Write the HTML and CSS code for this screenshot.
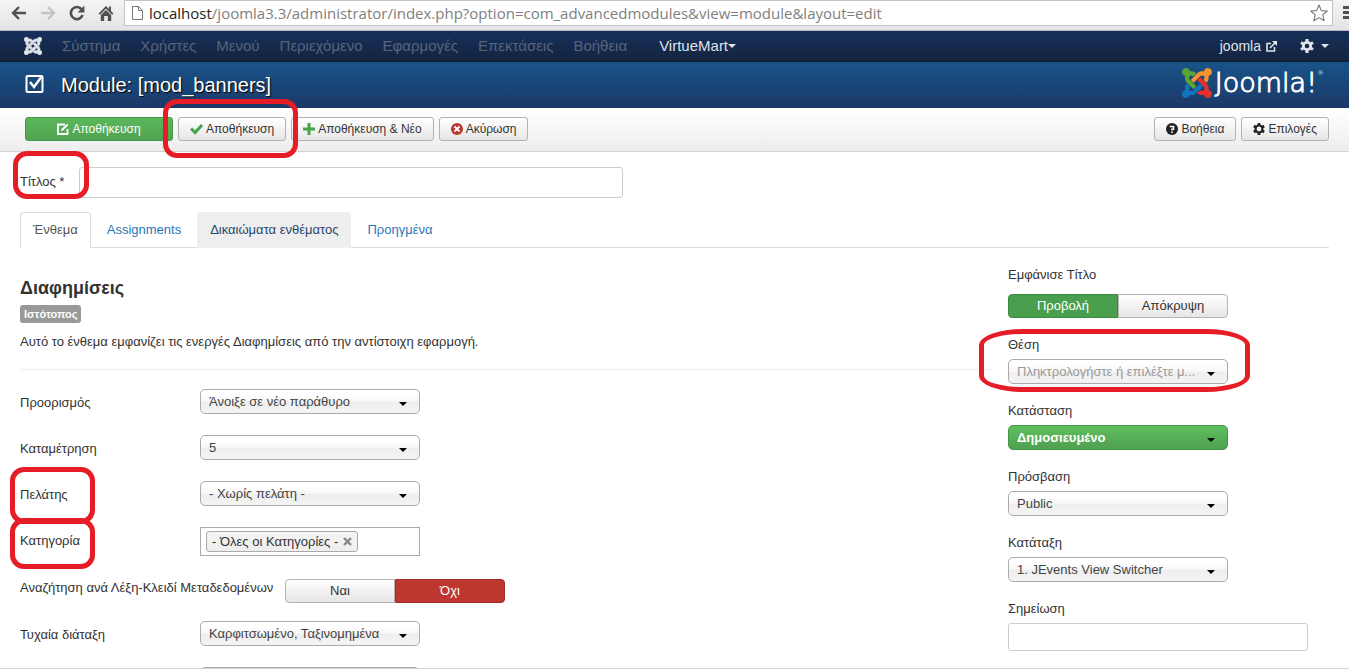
FILE: index.html
```html
<!DOCTYPE html>
<html lang="el">

<head>
    <meta charset="UTF-8">
    <meta name="viewport" content="width=device-width, initial-scale=1.0">
    <title>Module: [mod_banners]</title>
    <link rel="stylesheet" href="styles.css">
</head>

<body>

    <!-- Browser bar -->
    <div class="browser">
        <button class="browser-btn" aria-label="Back"><svg width="16" height="14" viewBox="0 0 16 14" fill="none" stroke="#505050" stroke-width="2.4"><path d="M15 7H2M8 1L2 7l6 6"/></svg></button>
        <button class="browser-btn" aria-label="Forward"><svg width="16" height="14" viewBox="0 0 16 14" fill="none" stroke="#c4c4c4" stroke-width="2.4"><path d="M1 7h13M8 1l6 6-6 6"/></svg></button>
        <button class="browser-btn" aria-label="Reload"><svg width="16" height="16" viewBox="0 0 16 16"><path d="M12.5 4.2A6 6 0 1 0 13.6 10" fill="none" stroke="#505050" stroke-width="2.6"/><path d="M15.4 0.6V7.4H8.6z" fill="#505050"/></svg></button>
        <button class="browser-btn" aria-label="Home"><svg width="16" height="16" viewBox="0 0 16 16" fill="#505050"><path d="M8 1L0.5 8.5l1.4 1.3L8 3.8l6.1 6 1.4-1.3L13 6V1.5h-2V4z"/><path d="M2.8 10L8 5l5.2 5v6H9.8v-5H6.2v5H2.8z"/></svg></button>
        <div class="address">
            <svg width="13" height="16" viewBox="0 0 13 16" fill="#fff" stroke="#777"><path d="M1.5 1.5h6l4 4v9h-10zM7.5 1.5v4h4"/></svg>
            <span class="url"><b>localhost</b>/joomla3.3/administrator/index.php?option=com_advancedmodules&amp;view=module&amp;layout=edit</span>
            <svg width="18" height="18" viewBox="0 0 18 18" fill="none" stroke="#777" stroke-width="1.1" stroke-linejoin="round"><path d="M9 1l2.3 5.6 6 .4-4.6 3.9 1.5 5.9L9 13.6l-5.2 3.2 1.5-5.9L.7 7l6-.4z"/></svg>
        </div>
        <svg class="menu-icon" width="14" height="14" viewBox="0 0 14 14" fill="#505050"><path d="M0 0h14v3H0zM0 5h14v3H0zM0 10h14v3H0z"/></svg>
    </div>

    <!-- Top navigation -->
    <nav class="navbar">
        <a href="#" class="brand" aria-label="Joomla">
            <svg width="18" height="18" viewBox="0 32 448 448" fill="#dfe3ea" stroke="#dfe3ea" stroke-width="14">
                <path d="M.6 92.1C.6 58.8 27.4 32 60.4 32c30 0 54.5 21.9 59.2 50.2 32.6-7.6 67.1.6 96.5 30l-44.3 44.3c-20.5-20.5-42.6-16.3-55.4-3.5-14.3 14.3-14.3 37.9 0 52.2l99.5 99.5-44 44.3c-87.7-87.2-49.7-49.7-99.8-99.7-26.8-26.5-35-64.8-24.8-98.9C20.4 144.6.6 120.7.6 92.1z"/>
                <path d="M130.1 208.5l44.3 44.3c10-10 89.7-89.7 99.7-99.8 14.3-14.3 37.6-14.3 51.9 0 12.8 12.8 17 35-3.5 55.4l44 44.3c31.2-31.2 38.5-67.6 28.9-101.2 29.2-4.1 51.9-29.2 51.9-59.5 0-33.2-26.8-60.1-59.8-60.1-30.3 0-55.4 22.5-59.5 51.6-33.8-9.9-71.7-1.5-98.3 25.1-18.3 19.1-71.1 71.5-99.6 99.9z"/>
                <path d="M396.4 360.7c8.2-32.7-.9-68.5-26.3-93.9-11.8-12.2 5 4.7-99.5-99.7l-44.3 44.3 99.7 99.7c14.3 14.3 14.3 37.6 0 51.9-12.8 12.8-35 17-55.4-3.5l-44 44.3c27.6 30.2 68 38.8 102.7 28 5.5 27.4 29.7 48.1 58.9 48.1 33 0 59.8-26.8 59.8-60.1 0-30.2-22.5-55-51.6-59.1z"/>
                <path d="M312.1 307.6l-44-44.3c-87 86.4-50.4 50.4-99.7 99.8-14.3 14.3-37.6 14.3-51.9 0-13.1-13.4-16.9-35.3 3.2-55.4l-44-44.3c-30.2 30.2-38 65.2-29.5 98.3-26.7 6-46.2 29.9-46.2 58.2C0 453.2 26.8 480 59.8 480c28.6 0 52.5-19.8 58.6-46.7 32.7 8.2 68.5-.6 94.2-26 32.1-32.2 12.2-12.2 99.5-99.7z"/>
            </svg>
        </a>
        <span class="disabled">Σύστημα</span>
        <span class="disabled">Χρήστες</span>
        <span class="disabled">Μενού</span>
        <span class="disabled">Περιεχόμενο</span>
        <span class="disabled">Εφαρμογές</span>
        <span class="disabled">Επεκτάσεις</span>
        <span class="disabled">Βοήθεια</span>
        <a href="#" class="component">VirtueMart<i class="caret"></i></a>
        <a href="#" class="site">joomla
            <svg width="11" height="11" viewBox="0 0 11 11" fill="none" stroke="#dfe3ea" stroke-width="1.6"><path d="M5 2.5H1v7.5h7.5V6"/><path d="M4 7l5-5"/><path d="M6 0h5v5z" fill="#dfe3ea" stroke="none"/></svg>
        </a>
        <a href="#" class="settings" aria-label="Settings">
            <svg width="14" height="14" viewBox="0 0 14 14"><circle cx="7" cy="7" r="3.7" fill="none" stroke="#dfe3ea" stroke-width="2.8"/><path d="M7 0v3M7 11v3M1 3.5l2.5 1.5M10.5 9L13 10.5M1 10.5L3.5 9M10.5 5L13 3.5" stroke="#dfe3ea" stroke-width="3.2"/></svg>
            <i class="caret"></i>
        </a>
    </nav>

    <!-- Page title -->
    <header class="header">
        <svg width="20" height="20" viewBox="0 0 20 20" fill="none" stroke="#fff"><rect x="1.5" y="1" width="16" height="16" rx="1" stroke-width="2"/><path d="M5 7l4 5 8-11" stroke-width="2.4"/></svg>
        <h1>Module: [mod_banners]</h1>
        <div class="logo">
            <svg width="30" height="30" viewBox="0 32 448 448">
                <path fill="#5ba532" d="M.6 92.1C.6 58.8 27.4 32 60.4 32c30 0 54.5 21.9 59.2 50.2 32.6-7.6 67.1.6 96.5 30l-44.3 44.3c-20.5-20.5-42.6-16.3-55.4-3.5-14.3 14.3-14.3 37.9 0 52.2l99.5 99.5-44 44.3c-87.7-87.2-49.7-49.7-99.8-99.7-26.8-26.5-35-64.8-24.8-98.9C20.4 144.6.6 120.7.6 92.1z"/>
                <path fill="#f9922f" d="M130.1 208.5l44.3 44.3c10-10 89.7-89.7 99.7-99.8 14.3-14.3 37.6-14.3 51.9 0 12.8 12.8 17 35-3.5 55.4l44 44.3c31.2-31.2 38.5-67.6 28.9-101.2 29.2-4.1 51.9-29.2 51.9-59.5 0-33.2-26.8-60.1-59.8-60.1-30.3 0-55.4 22.5-59.5 51.6-33.8-9.9-71.7-1.5-98.3 25.1-18.3 19.1-71.1 71.5-99.6 99.9z"/>
                <path fill="#e8302a" d="M396.4 360.7c8.2-32.7-.9-68.5-26.3-93.9-11.8-12.2 5 4.7-99.5-99.7l-44.3 44.3 99.7 99.7c14.3 14.3 14.3 37.6 0 51.9-12.8 12.8-35 17-55.4-3.5l-44 44.3c27.6 30.2 68 38.8 102.7 28 5.5 27.4 29.7 48.1 58.9 48.1 33 0 59.8-26.8 59.8-60.1 0-30.2-22.5-55-51.6-59.1z"/>
                <path fill="#1274bb" d="M312.1 307.6l-44-44.3c-87 86.4-50.4 50.4-99.7 99.8-14.3 14.3-37.6 14.3-51.9 0-13.1-13.4-16.9-35.3 3.2-55.4l-44-44.3c-30.2 30.2-38 65.2-29.5 98.3-26.7 6-46.2 29.9-46.2 58.2C0 453.2 26.8 480 59.8 480c28.6 0 52.5-19.8 58.6-46.7 32.7 8.2 68.5-.6 94.2-26 32.1-32.2 12.2-12.2 99.5-99.7z"/>
            </svg>
            <span>Joomla!</span><sup>®</sup>
        </div>
    </header>

    <!-- Toolbar -->
    <div class="toolbar">
        <button class="btn btn-success btn-apply">
            <svg width="12" height="12" viewBox="0 0 12 12" fill="none" stroke="#fff" stroke-width="1.8"><path d="M8 1.5H1v9.5h9.5V6"/><path d="M4 8l.5-2L10 .8 11.4 2 6 7.5z" fill="#fff" stroke="none"/></svg>
            Αποθήκευση
        </button>
        <div class="marked">
            <button class="btn">
                <svg width="13" height="12" viewBox="0 0 13 12" fill="none" stroke="#46a546" stroke-width="3"><path d="M1 5.5l4 4 7-7.5"/></svg>
                Αποθήκευση
            </button>
            <span class="mark mark-save"></span>
        </div>
        <button class="btn">
            <svg width="12" height="12" viewBox="0 0 12 12" fill="#46a546"><path d="M4.5 0h3v4.5H12v3H7.5V12h-3V7.5H0v-3h4.5z"/></svg>
            Αποθήκευση &amp; Νέο
        </button>
        <button class="btn">
            <svg width="12" height="12" viewBox="0 0 12 12"><circle cx="6" cy="6" r="6" fill="#bd362f"/><path d="M3.5 3.5l5 5M8.5 3.5l-5 5" stroke="#fff" stroke-width="1.8"/></svg>
            Ακύρωση
        </button>
        <span class="spacer"></span>
        <button class="btn">
            <svg width="12" height="12" viewBox="0 0 12 12"><circle cx="6" cy="6" r="6" fill="#222"/><path d="M3.8 3.5h3.7v2.7H6V7.5" fill="none" stroke="#fff" stroke-width="1.5"/><path d="M5.2 8.5h1.6V10H5.2z" fill="#fff"/></svg>
            Βοήθεια
        </button>
        <button class="btn">
            <svg width="12" height="12" viewBox="0 0 14 14"><circle cx="7" cy="7" r="4" fill="none" stroke="#222" stroke-width="2.4"/><path d="M7 0v3M7 11v3M1 3.5l2.5 1.5M10.5 9L13 10.5M1 10.5L3.5 9M10.5 5L13 3.5" stroke="#222" stroke-width="3.2"/></svg>
            Επιλογές
        </button>
    </div>

    <main class="content">
        <div class="title-row">
            <label class="marked" for="title">Τίτλος *<span class="mark mark-title"></span></label>
            <input class="input-title" type="text" id="title">
        </div>

        <div class="tabs">
            <a href="#" class="active">Ένθεμα</a>
            <a href="#">Assignments</a>
            <a href="#" class="hover">Δικαιώματα ενθέματος</a>
            <a href="#">Προηγμένα</a>
        </div>

        <div class="columns">
            <section class="left">
                <h3>Διαφημίσεις</h3>
                <span class="badge">Ιστότοπος</span>
                <p>Αυτό το ένθεμα εμφανίζει τις ενεργές Διαφημίσεις από την αντίστοιχη εφαρμογή.</p>
                <hr>
                <div class="row">
                    <label for="target">Προορισμός</label>
                    <select id="target"><option>Άνοιξε σε νέο παράθυρο</option></select>
                </div>
                <div class="row">
                    <label for="count">Καταμέτρηση</label>
                    <select id="count"><option>5</option></select>
                </div>
                <div class="row">
                    <label class="marked" for="client">Πελάτης<span class="mark mark-client"></span></label>
                    <select id="client"><option>- Χωρίς πελάτη -</option></select>
                </div>
                <div class="row row-category">
                    <label class="marked" for="category">Κατηγορία<span class="mark mark-category"></span></label>
                    <div class="choices">
                        <span class="choice">- Όλες οι Κατηγορίες -
                            <button aria-label="Αφαίρεση"><svg width="9" height="9" viewBox="0 0 9 9" stroke="#888" stroke-width="2.4"><path d="M1 1l7 7M8 1L1 8"/></svg></button>
                        </span>
                        <input type="text" id="category">
                    </div>
                </div>
                <div class="row row-search">
                    <span class="row-label" id="search-label">Αναζήτηση ανά Λέξη-Κλειδί Μεταδεδομένων</span>
                    <div class="btn-group" role="radiogroup" aria-labelledby="search-label">
                        <input type="radio" name="search" id="search1"><label for="search1">Ναι</label>
                        <input type="radio" name="search" id="search0" checked><label class="no" for="search0">Όχι</label>
                    </div>
                </div>
                <div class="row">
                    <label for="ordering">Τυχαία διάταξη</label>
                    <select id="ordering"><option>Καρφιτσωμένο, Ταξινομημένα</option></select>
                </div>
                <div class="row">
                    <label for="header"></label>
                    <select id="header"></select>
                </div>
            </section>

            <section class="right">
                <span class="field-label" id="show-label">Εμφάνισε Τίτλο</span>
                <div class="btn-group" role="radiogroup" aria-labelledby="show-label">
                    <input type="radio" name="show" id="show1" checked><label class="yes" for="show1">Προβολή</label>
                    <input type="radio" name="show" id="show0"><label for="show0">Απόκρυψη</label>
                </div>
                <div class="field marked">
                    <label for="position">Θέση</label>
                    <select class="placeholder" id="position"><option>Πληκτρολογήστε ή επιλέξτε μ...</option></select>
                    <span class="mark mark-position"></span>
                </div>
                <div class="field">
                    <label for="state">Κατάσταση</label>
                    <select class="published" id="state"><option>Δημοσιευμένο</option></select>
                </div>
                <div class="field">
                    <label for="access">Πρόσβαση</label>
                    <select id="access"><option>Public</option></select>
                </div>
                <div class="field">
                    <label for="order">Κατάταξη</label>
                    <select id="order"><option>1. JEvents View Switcher</option></select>
                </div>
                <div class="field">
                    <label for="note">Σημείωση</label>
                    <input class="input-note" type="text" id="note">
                </div>
            </section>
        </div>
    </main>

    <footer class="status"></footer>

</body>

</html>
```

FILE: styles.css
```css
* {
    box-sizing: border-box;
}

body {
    display: flex;
    flex-direction: column;
    height: 100vh;
    margin: 0;
    overflow: hidden;
    background: #fff;
    color: #333;
    font-family: Arial, "Liberation Sans", sans-serif;
    font-size: 13px;
    line-height: 18px;
}

button,
input,
select {
    font: inherit;
}

a {
    color: #2a76b8;
    text-decoration: none;
}

svg {
    flex: none;
}

/* Browser bar */
.browser {
    display: flex;
    flex: none;
    align-items: flex-start;
    height: 31px;
    padding-left: 8px;
    overflow: hidden;
    background: linear-gradient(#f4f4f4, #e4e4e4);
    border-bottom: 1px solid #b5b8bd;
}

.browser-btn {
    display: flex;
    align-items: center;
    justify-content: center;
    width: 21px;
    height: 26px;
    margin-right: 8px;
    padding: 0;
    background: none;
    border: 0;
}

.address {
    display: flex;
    flex: 1;
    align-items: center;
    gap: 5px;
    height: 26px;
    padding: 0 4px 0 6px;
    background: #fff;
    border: 1px solid #c3c3c3;
}

.url {
    flex: 1;
    color: #808080;
    font-family: "Open Sans", "Noto Sans", sans-serif;
    font-size: 15px;
    line-height: 24px;
    white-space: nowrap;
}

.url b {
    color: #222;
    font-weight: normal;
}

.menu-icon {
    width: 14px;
    margin: 6px -8px 0 10px;
}

/* Top navigation */
.navbar {
    display: flex;
    flex: none;
    align-items: center;
    gap: 20px;
    height: 31px;
    padding: 0 20px 0 24px;
    background: linear-gradient(#17305a, #13243f);
    border-bottom: 1px solid #0d1a2f;
    font-size: 15px;
}

.navbar a {
    display: flex;
    align-items: center;
    color: #dfe3ea;
}

.navbar .disabled {
    color: #56647e;
}

.navbar .component {
    margin-left: 12px;
}

.navbar .site {
    gap: 5px;
    margin-left: auto;
    font-size: 14px;
}

.navbar .settings {
    gap: 7px;
    margin-left: 3px;
}

.caret {
    border: 4px solid transparent;
    border-top-color: currentColor;
    border-bottom: 0;
}

/* Page title */
.header {
    display: flex;
    flex: none;
    align-items: center;
    height: 46px;
    padding: 0 25px;
    background: linear-gradient(#185489, #1c3868);
    color: #fff;
}

.header h1 {
    margin: 0 0 0 16px;
    font-size: 20px;
    font-weight: normal;
    line-height: 24px;
    text-shadow: 1px 1px 1px #000;
}

.logo {
    display: flex;
    align-items: center;
    gap: 3px;
    margin-left: auto;
    padding-bottom: 4px;
    font-family: "DejaVu Sans", sans-serif;
    font-size: 27px;
    font-weight: 200;
    line-height: 30px;
}

.logo span {
    -webkit-text-stroke: 1px #fff;
}

.logo sup {
    align-self: flex-start;
    margin-left: -3px;
    font-size: 7px;
    line-height: 10px;
}

/* Toolbar */
.toolbar {
    display: flex;
    flex: none;
    align-items: center;
    gap: 5px;
    height: 44px;
    padding: 0 20px 2px 25px;
    background: linear-gradient(#fff, #ededed);
    border-bottom: 1px solid #d3d3d3;
}

.spacer {
    flex: 1;
}

.btn {
    display: flex;
    align-items: center;
    justify-content: center;
    gap: 3px;
    height: 24px;
    padding: 0 11px;
    background: linear-gradient(#fff, #e6e6e6);
    border: 1px solid #b3b3b3;
    border-radius: 3px;
    color: #333;
    font-size: 12px;
    white-space: nowrap;
}

.btn-success {
    background: linear-gradient(#5bb75b, #51a351);
    border-color: #46964a;
    color: #fff;
}

.btn-apply {
    width: 148px;
}

/* Red marker outlines */
.marked {
    position: relative;
}

.mark {
    position: absolute;
    border: 5px solid #e61d27;
    border-radius: 14px;
    pointer-events: none;
}

.mark-save {
    inset: -18px -12px -17px -15px;
    z-index: 1;
}

.mark-title {
    inset: -16px -10px -1px -7px;
}

.mark-client {
    inset: -14px 105px -18px -10px;
}

.mark-category {
    inset: -9px 105px -13px -10px;
}

.mark-position {
    inset: -7px 79px -8px -29px;
    border-radius: 44px / 16px;
}

/* Title field and tabs */
.content {
    flex: 1;
    min-height: 0;
    margin-top: -1px;
    padding: 16px 20px 0;
    overflow: hidden;
}

.title-row {
    display: flex;
}

.title-row label {
    width: 59px;
    padding-top: 6px;
}

input[type="text"] {
    background: #fff;
    border: 1px solid #ccc;
    border-radius: 3px;
}

.input-title {
    width: 544px;
    height: 31px;
}

.tabs {
    display: flex;
    gap: 3px;
    margin: 14px 0 18px;
    box-shadow: inset 0 -1px #ddd;
}

.tabs a {
    padding: 8px 12px 9px;
    border: 1px solid transparent;
    border-bottom: 0;
    border-radius: 4px 4px 0 0;
}

.tabs .active {
    background: #fff;
    border-color: #ddd;
    color: #555;
}

.tabs .hover {
    background: #eee;
    color: #1f496e;
}

/* Columns */
.columns {
    display: grid;
    grid-template-columns: 1fr 321px;
    gap: 16px;
}

.left h3 {
    margin: 12px 0 7px;
    font-size: 18px;
    line-height: 20px;
}

.badge {
    display: block;
    width: fit-content;
    padding: 0 4px;
    background: #999;
    border-radius: 3px;
    color: #fff;
    font-size: 11px;
    font-weight: bold;
}

.left p {
    margin: 10px 0 18px;
}

.left hr {
    height: 1px;
    margin: 0 0 19px;
    background: #eee;
    border: 0;
}

.row {
    display: flex;
    margin-bottom: 21px;
}

.row > label {
    width: 180px;
    padding-top: 5px;
}

select {
    display: block;
    width: 220px;
    height: 25px;
    padding: 0 26px 0 8px;
    appearance: none;
    background: url("data:image/svg+xml,%3Csvg xmlns='http://www.w3.org/2000/svg' width='8' height='4'%3E%3Cpath d='M0 0h8L4 4z'/%3E%3C/svg%3E") no-repeat right 12px top 12px, linear-gradient(#fff 20%, #f6f6f6 50%, #eee 52%, #f4f4f4);
    border: 1px solid #aaa;
    border-radius: 5px;
    color: #444;
}

.placeholder {
    color: #999;
}

.published {
    background: url("data:image/svg+xml,%3Csvg xmlns='http://www.w3.org/2000/svg' width='8' height='4'%3E%3Cpath d='M0 0h8L4 4z'/%3E%3C/svg%3E") no-repeat right 12px top 12px, linear-gradient(#5fbf5f, #4fa04f);
    border-color: #46964a;
    color: #fff;
    font-weight: bold;
}

.choices {
    display: flex;
    width: 220px;
    height: 29px;
    padding: 3px 5px;
    border: 1px solid #aaa;
}

.choices input[type="text"] {
    flex: 1;
    min-width: 0;
    border: 0;
}

.choice {
    display: flex;
    align-items: center;
    gap: 5px;
    height: 21px;
    padding: 0 5px;
    background: linear-gradient(#f4f4f4, #eee);
    border: 1px solid #aaa;
    border-radius: 3px;
    white-space: nowrap;
}

.choice button {
    display: flex;
    padding: 0;
    background: none;
    border: 0;
}

.row-category {
    margin-bottom: 23px;
}

.row-search {
    gap: 5px;
    margin-bottom: 18px;
}

.row-label {
    min-width: 260px;
}

.btn-group {
    display: flex;
    width: 220px;
}

.btn-group input {
    position: absolute;
    opacity: 0;
}

.btn-group label {
    flex: 1;
    height: 24px;
    background: linear-gradient(#fff, #e6e6e6);
    border: 1px solid #b3b3b3;
    line-height: 22px;
    text-align: center;
}

.btn-group label:first-of-type {
    border-radius: 4px 0 0 4px;
}

.btn-group label:last-of-type {
    border-radius: 0 4px 4px 0;
}

.btn-group .yes {
    background: #4a9f4f;
    border-color: #398a3f;
    color: #fff;
}

.btn-group .no {
    background: #bd362f;
    border-color: #a22c27;
    color: #fff;
}

.field-label {
    display: block;
    margin-bottom: 10px;
}

.right .btn-group {
    margin-bottom: 18px;
}

.field {
    margin-bottom: 18px;
}

.field label {
    display: block;
    margin-bottom: 5px;
}

.input-note {
    display: block;
    width: 300px;
    height: 28px;
}

.status {
    flex: none;
    height: 1px;
    background: #d4d4d4;
}
```
